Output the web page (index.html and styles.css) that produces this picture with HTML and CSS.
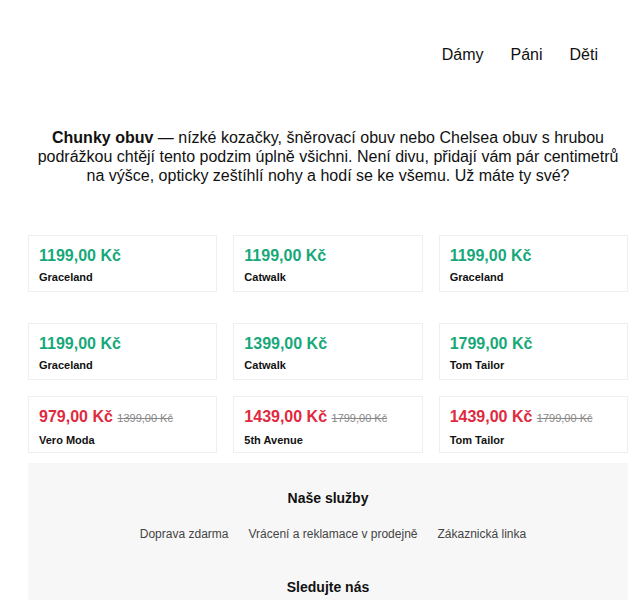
FILE: index.html
```html
<!DOCTYPE html>
<html lang="cs">
<head>
<meta charset="utf-8">
<title>Chunky obuv</title>
<link rel="stylesheet" href="styles.css">
</head>
<body>
<header class="header">
  <nav class="nav">
    <a href="#" class="nav-link">Dámy</a>
    <a href="#" class="nav-link">Páni</a>
    <a href="#" class="nav-link">Děti</a>
  </nav>
</header>
<main class="main">
  <p class="intro"><strong>Chunky obuv</strong> — nízké kozačky, šněrovací obuv nebo Chelsea obuv s hrubou podrážkou chtějí tento podzim úplně všichni. Není divu, přidají vám pár centimetrů na výšce, opticky zeštíhlí nohy a hodí se ke všemu. Už máte ty své?</p>

  <section class="grid grid-first">
    <div class="card"><div class="price">1199,00 Kč</div><div class="brand">Graceland</div></div>
    <div class="card"><div class="price">1199,00 Kč</div><div class="brand">Catwalk</div></div>
    <div class="card"><div class="price">1199,00 Kč</div><div class="brand">Graceland</div></div>
  </section>

  <section class="grid grid-second">
    <div class="card"><div class="price">1199,00 Kč</div><div class="brand">Graceland</div></div>
    <div class="card"><div class="price">1399,00 Kč</div><div class="brand">Catwalk</div></div>
    <div class="card"><div class="price">1799,00 Kč</div><div class="brand">Tom Tailor</div></div>
    <div class="card"><div class="price sale">979,00 Kč <span class="old">1399,00 Kč</span></div><div class="brand">Vero Moda</div></div>
    <div class="card"><div class="price sale">1439,00 Kč <span class="old">1799,00 Kč</span></div><div class="brand">5th Avenue</div></div>
    <div class="card"><div class="price sale">1439,00 Kč <span class="old">1799,00 Kč</span></div><div class="brand">Tom Tailor</div></div>
  </section>

  <footer class="footer">
    <h2 class="footer-title">Naše služby</h2>
    <ul class="footer-links">
      <li><a href="#">Doprava zdarma</a></li>
      <li><a href="#">Vrácení a reklamace v prodejně</a></li>
      <li><a href="#">Zákaznická linka</a></li>
    </ul>
    <h2 class="footer-title follow">Sledujte nás</h2>
  </footer>
</main>
</body>
</html>
```
FILE: styles.css
```css
* { box-sizing: border-box; }
html, body { margin: 0; padding: 0; background: #fff; }
body {
  font-family: "Liberation Sans", Arial, sans-serif;
  color: #111;
}
a { color: inherit; text-decoration: none; }

.header {
  display: flex;
  justify-content: flex-end;
  padding: 46px 42px 0 0;
}
.nav {
  display: flex;
  gap: 27px;
}
.nav-link {
  font-size: 16px;
  line-height: 18px;
  color: #111;
}

.main {
  width: 600px;
  margin-left: 28px;
}

.intro {
  margin: 64px 0 0;
  font-size: 16px;
  line-height: 19px;
  text-align: center;
  color: #111;
}
.intro strong { font-weight: 700; }

.grid {
  display: grid;
  grid-template-columns: repeat(3, 1fr);
  gap: 16px;
}
.grid-first { margin-top: 50px; }
.grid-second { margin-top: 31px; }

.card {
  border: 1px solid #efefef;
  padding: 10px 10px 8px;
  height: 57px;
}
.price {
  font-size: 16px;
  line-height: 19px;
  font-weight: 700;
  color: #17a87a;
  white-space: nowrap;
}
.price.sale { color: #e02a40; }
.old {
  font-size: 11px;
  font-weight: 400;
  color: #888;
  text-decoration: line-through;
}
.brand {
  margin-top: 6px;
  font-size: 11px;
  line-height: 12px;
  font-weight: 700;
  color: #111;
}

.footer {
  margin-top: 10px;
  background: #f7f7f7;
  padding: 25px 0 20px;
  text-align: center;
}
.footer-title {
  margin: 0;
  font-size: 14px;
  line-height: 20px;
  font-weight: 700;
  color: #111;
}
.footer-title.follow { margin-top: 36px; }
.footer-links {
  list-style: none;
  margin: 19px 0 0;
  padding: 0 0 0 10px;
  display: flex;
  justify-content: center;
  gap: 20px;
  font-size: 12px;
  line-height: 14px;
  color: #444;
}
```
